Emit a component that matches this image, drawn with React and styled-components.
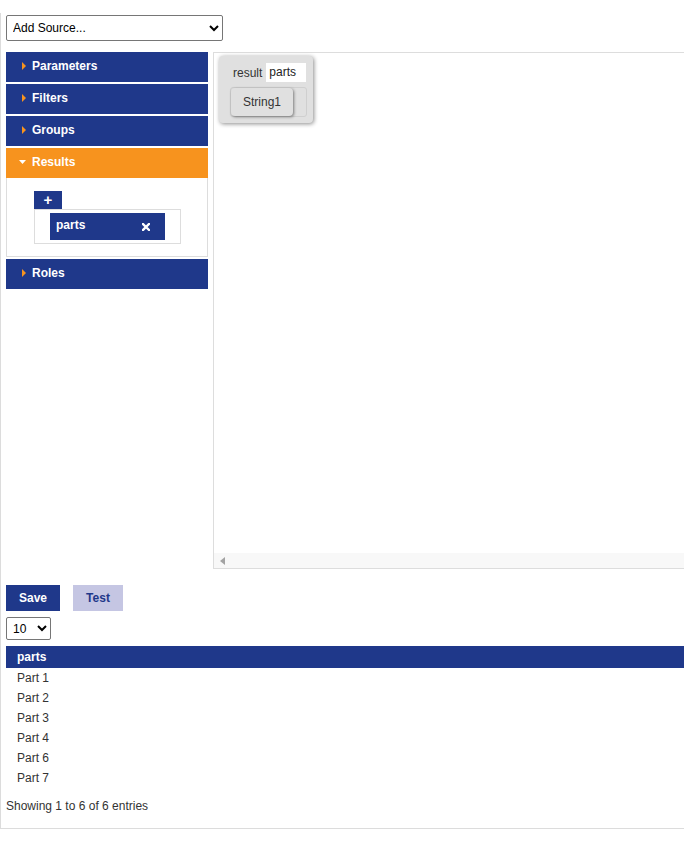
import React from "react";
import styled, { createGlobalStyle } from "styled-components";

const BLUE = "#1f388a";
const ORANGE = "#f7931e";

const Global = createGlobalStyle`
  html, body { margin: 0; padding: 0; background: #fff; overflow-x: hidden; }
  body { font-family: "Liberation Sans", Arial, sans-serif; font-size: 12px; color: #333; }
`;

const Page = styled.div`
  margin-top: 13px;
  width: 740px;
  height: 816px;
  box-sizing: border-box;
  border-left: 1px solid #dcdcdc;
  border-bottom: 1px solid #dcdcdc;
  padding: 2px 0 0 5px;
  display: flex;
  flex-direction: column;
`;

const Select = styled.select`
  font-family: "Liberation Sans", Arial, sans-serif;
  font-size: 12px;
  color: #000;
  background: #fff;
  border: 1px solid #767676;
  border-radius: 2px;
  box-sizing: border-box;
  width: ${(p) => p.$w}px;
  height: ${(p) => p.$h}px;
  padding: 0 2px;
  margin-top: ${(p) => p.$mt || 0}px;
`;

const Workspace = styled.div`
  display: flex;
  gap: 5px;
  margin-top: 11px;
`;

const Sidebar = styled.div`
  width: 202px;
  display: flex;
  flex-direction: column;
  gap: 2px;
`;

const Header = styled.div`
  height: 30px;
  background: ${(p) => (p.$open ? ORANGE : BLUE)};
  color: #fff;
  font-weight: bold;
  font-size: 12px;
  display: flex;
  align-items: center;
  padding-left: ${(p) => (p.$open ? 13 : 16)}px;
  padding-bottom: 2px;
  gap: 6px;
  box-sizing: border-box;
`;

const Section = styled.div`
  display: flex;
  flex-direction: column;
`;

const Panel = styled.div`
  border: 1px solid #ddd;
  border-top: none;
  padding: 13px 26px 12px 27px;
`;

const AddButton = styled.div`
  width: 28px;
  height: 18px;
  background: ${BLUE};
  color: #fff;
  font-weight: bold;
  font-size: 15px;
  line-height: 18px;
  text-align: center;
`;

const ChipBox = styled.div`
  border: 1px solid #ddd;
  height: 35px;
  padding: 3px 0 0 15px;
  box-sizing: border-box;
  width: 147px;
`;

const Chip = styled.div`
  width: 115px;
  height: 27px;
  background: ${BLUE};
  color: #fff;
  font-weight: bold;
  font-size: 12px;
  display: flex;
  align-items: center;
  justify-content: space-between;
  padding: 0 15px 0 6px;
  box-sizing: border-box;
  & > span:first-child { margin-top: -3px; }
`;

const Canvas = styled.div`
  flex: 1;
  height: 517px;
  border: 1px solid #ddd;
  box-sizing: border-box;
  display: flex;
  flex-direction: column;
`;

const CanvasArea = styled.div`
  flex: 1;
  padding: 3px 5px;
`;

const Node = styled.div`
  width: 94px;
  height: 67px;
  box-sizing: border-box;
  background: #e0e0e0;
  border-radius: 4px;
  box-shadow: 1px 1px 4px rgba(0, 0, 0, 0.45);
  padding: 7px 6px 0 11px;
  display: flex;
  flex-direction: column;
  gap: 5px;
`;

const NodeTitle = styled.div`
  display: flex;
  align-items: center;
  gap: 4px;
  padding-left: 3px;
  color: #333;
  font-size: 12px;
`;

const NameInput = styled.div`
  width: 40px;
  height: 19px;
  background: #fff;
  color: #222;
  font-size: 12px;
  line-height: 19px;
  padding-left: 3px;
  box-sizing: border-box;
`;

const Slot = styled.div`
  width: 77px;
  height: 30px;
  border: 1px solid #cfcfcf;
  border-radius: 3px;
  box-sizing: border-box;
  display: flex;
  align-items: center;
`;

const FieldButton = styled.div`
  width: 62px;
  height: 28px;
  background: #e0e0e0;
  border-radius: 4px;
  box-shadow: 1px 1px 3px rgba(0, 0, 0, 0.45);
  color: #333;
  font-size: 12px;
  display: flex;
  align-items: center;
  justify-content: center;
`;

const Scrollbar = styled.div`
  height: 15px;
  background: #f8f8f8;
  display: flex;
  align-items: center;
  padding-left: 6px;
`;

const ButtonRow = styled.div`
  display: flex;
  gap: 13px;
  margin-top: 16px;
`;

const Button = styled.div`
  height: 26px;
  width: ${(p) => p.$w}px;
  background: ${(p) => (p.$muted ? "#c5c6e3" : BLUE)};
  color: ${(p) => (p.$muted ? BLUE : "#fff")};
  font-weight: bold;
  font-size: 12px;
  display: flex;
  align-items: center;
  justify-content: center;
`;

const Table = styled.div`
  margin-top: 6px;
  display: flex;
  flex-direction: column;
`;

const HeadRow = styled.div`
  height: 22px;
  background: ${BLUE};
  color: #fff;
  font-weight: bold;
  font-size: 12px;
  display: flex;
  align-items: center;
  padding-left: 11px;
`;

const Row = styled.div`
  height: 20px;
  display: flex;
  align-items: center;
  padding-left: 11px;
  color: #333;
  font-size: 12px;
`;

const Info = styled.div`
  margin-top: 11px;
  font-size: 12px;
  color: #333;
`;

const RightTri = () => (
  <svg width="4" height="8" viewBox="0 0 4 8">
    <path d="M0 0 L4 4 L0 8 Z" fill={ORANGE} />
  </svg>
);

const DownTri = () => (
  <svg width="7" height="4" viewBox="0 0 7 4">
    <path d="M0 0 L7 0 L3.5 4 Z" fill="#fff" />
  </svg>
);

const LeftTri = () => (
  <svg width="5" height="8" viewBox="0 0 5 8">
    <path d="M5 0 L0 4 L5 8 Z" fill="#a3a3a3" />
  </svg>
);

const Times = () => (
  <svg width="8" height="8" viewBox="0 0 8 8">
    <path d="M1 1 L7 7 M7 1 L1 7" stroke="#fff" strokeWidth="2.4" strokeLinecap="square" />
  </svg>
);

const AccHeader = ({ label, open }) => (
  <Header $open={open}>
    {open ? <DownTri /> : <RightTri />}
    <span>{label}</span>
  </Header>
);

const parts = ["Part 1", "Part 2", "Part 3", "Part 4", "Part 6", "Part 7"];

export default function App() {
  return (
    <>
      <Global />
      <Page>
        <Select $w={217} $h={26} defaultValue="a">
          <option value="a">Add Source...</option>
        </Select>
        <Workspace>
          <Sidebar>
            <AccHeader label="Parameters" />
            <AccHeader label="Filters" />
            <AccHeader label="Groups" />
            <Section>
              <AccHeader label="Results" open />
              <Panel>
                <AddButton>+</AddButton>
                <ChipBox>
                  <Chip>
                    <span>parts</span>
                    <Times />
                  </Chip>
                </ChipBox>
              </Panel>
            </Section>
            <AccHeader label="Roles" />
          </Sidebar>
          <Canvas>
            <CanvasArea>
              <Node>
                <NodeTitle>
                  <span>result</span>
                  <NameInput>parts</NameInput>
                </NodeTitle>
                <Slot>
                  <FieldButton>String1</FieldButton>
                </Slot>
              </Node>
            </CanvasArea>
            <Scrollbar>
              <LeftTri />
            </Scrollbar>
          </Canvas>
        </Workspace>
        <ButtonRow>
          <Button $w={54}>Save</Button>
          <Button $w={50} $muted>Test</Button>
        </ButtonRow>
        <Select $w={45} $h={23} $mt={6} defaultValue="10">
          <option value="10">10</option>
        </Select>
        <Table>
          <HeadRow>parts</HeadRow>
          {parts.map((p) => (
            <Row key={p}>{p}</Row>
          ))}
        </Table>
        <Info>Showing 1 to 6 of 6 entries</Info>
      </Page>
    </>
  );
}
